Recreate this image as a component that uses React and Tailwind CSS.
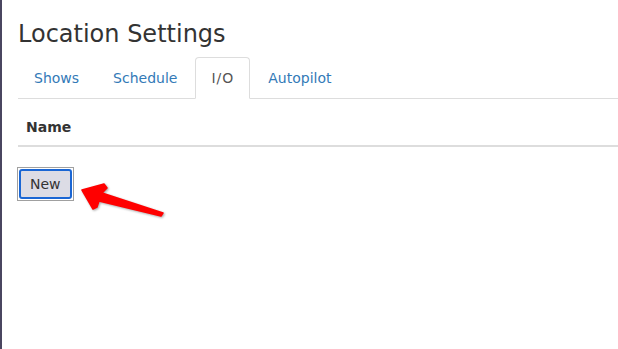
import React from 'react';

const tabs = ['Shows', 'Schedule', 'I/O', 'Autopilot'];

const Arrow = () => (
  <svg
    className="absolute left-0 top-0 pointer-events-none"
    width="618"
    height="349"
    style={{ filter: 'drop-shadow(1px 1px 1px rgba(0,0,0,0.35))' }}
  >
    <polygon
      points="82,190 104,184 107,188 102,193 163,213 161,216 99,201 97,207 93,209"
      fill="#ff0000"
      strokeLinejoin="round"
      stroke="#ff0000"
      strokeWidth="1.5"
    />
  </svg>
);

export default function App() {
  return (
    <div className="relative flex h-[349px] w-[618px] overflow-hidden bg-white text-[14px] text-[#333]" style={{ fontFamily: '"DejaVu Sans", Verdana, sans-serif' }}>
      <div className="w-[2px] shrink-0 bg-[#4a4660]" />
      <div className="flex-1 pl-[16px]">
        <h3 className="mt-[21px] mb-[10px] text-[24px] leading-[1.1] font-normal text-[#333]">Location Settings</h3>

        <ul className="flex border-b border-[#ddd]">
          {tabs.map((t) => {
            const active = t === 'I/O';
            return (
              <li key={t} className="-mb-px">
                <a
                  href="#"
                  className={
                    active
                      ? 'block mr-[2px] px-[15px] py-[10px] leading-[20px] tracking-[1px] rounded-t-[4px] border border-[#ddd] border-b-white bg-white text-[#555]'
                      : 'block mr-[2px] px-[15px] py-[10px] leading-[20px] rounded-t-[4px] border border-transparent text-[#337ab7]'
                  }
                >
                  {t}
                </a>
              </li>
            );
          })}
        </ul>

        <table className="mt-[10px] w-full border-collapse">
          <thead>
            <tr>
              <th className="px-[8px] py-[8px] text-left font-bold leading-[20px] border-b-2 border-[#ddd]">Name</th>
            </tr>
          </thead>
        </table>

        <button className="mt-[20px] -ml-px block border border-[#a0a0a0] p-[1px] bg-white">
          <span className="block rounded-[3px] border-2 border-[#1a66d4] bg-[#dcdce5] px-[9px] py-[3px] leading-[20px] text-[14px] text-[#333]">
            New
          </span>
        </button>
      </div>
      <Arrow />
    </div>
  );
}
